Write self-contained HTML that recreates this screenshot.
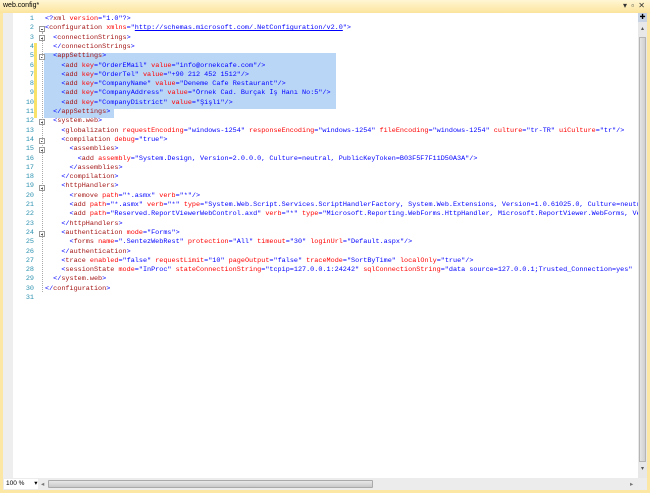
<!DOCTYPE html>
<html><head><meta charset="utf-8"><style>
*{margin:0;padding:0;box-sizing:border-box}
body{width:650px;height:493px;overflow:hidden;background:#fce8a4;font-family:"Liberation Sans",sans-serif;position:relative}
#title{position:absolute;left:0;top:0;width:650px;height:13px;background:linear-gradient(#fff6d4,#fbe49c);font-size:7px;color:#000;padding:2px 0 0 3px}
#ctl{position:absolute;right:4px;top:1px;font-size:8px;color:#333;letter-spacing:1px}
#ed{position:absolute;left:3px;top:13px;width:644px;height:465px;background:#fff;overflow:hidden}
#gut{position:absolute;left:0;top:0;width:10px;height:465px;background:#eeeeee}
#in{position:absolute;left:0;top:2px;width:644px;height:463px}
.ln{position:absolute;left:10px;width:21px;text-align:right;color:#2b91af;font:6.8px "Liberation Mono",monospace;line-height:9.3px}
.code{position:absolute;left:42px;white-space:pre;font:6.8px "Liberation Mono",monospace;color:#0000ff;height:9.3px;line-height:9.3px}
.selb{position:absolute;background:#b9d6f7}
.t{color:#a31515}.a{color:#ff0000}.u{text-decoration:underline}
.chg{position:absolute;left:31px;width:3px;background:#f8e26a}
.box{position:absolute;left:36px;width:6px;height:6px;border:1px solid #999;background:#fff}
.box:after{content:"";position:absolute;left:1px;top:2px;width:2px;height:1px;background:#555}
.vl{position:absolute;left:39px;width:1px;border-left:1px dotted #aaa}
#vs{position:absolute;left:635px;top:0;width:9px;height:465px;background:#e8e8e8}
#vt{position:absolute;left:1px;top:24px;width:7px;height:425px;background:linear-gradient(90deg,#e5e5e5,#cfcfcf);border:1px solid #b5b5b5}
#bot{position:absolute;left:3px;top:478px;width:644px;height:12px;background:#ececec;font-size:6.5px}
#zm{position:absolute;left:1px;top:1px;width:34px;height:10px;background:#fff;padding-left:2px}
#hs{position:absolute;left:45px;top:2px;width:325px;height:8px;background:linear-gradient(#e8e8e8,#c9c9c9);border:1px solid #aaa;border-radius:1px}
</style></head><body>
<div id="title">web.config*</div><div id="ctl">▾ ▫ ✕</div>
<div id="ed">
<div id="gut"></div>
<div id="in">
<div class="chg" style="top:28px;height:75px"></div>
<div class="selb" style="left:41px;top:37.5px;width:292px;height:56px"></div>
<div class="selb" style="left:41px;top:93.5px;width:70px;height:9.3px"></div>
<div class="box" style="top:11px"></div>
<div class="box" style="top:20px"></div>
<div class="box" style="top:39px"></div>
<div class="box" style="top:104px"></div>
<div class="box" style="top:123px"></div>
<div class="box" style="top:132px"></div>
<div class="box" style="top:170px"></div>
<div class="box" style="top:216px"></div>
<div class="vl" style="top:17px;height:260px"></div>
<div id="lines"></div>
<div class="code" style="top:0px">&lt;?<span class="t">xml</span> <span class="a">version</span>="1.0"?&gt;</div>
<div class="code" style="top:9.3px">&lt;<span class="t">configuration</span> <span class="a">xmlns</span>="<span class="u">http://schemas.microsoft.com/.NetConfiguration/v2.0</span>"&gt;</div>
<div class="code" style="top:18.6px">  &lt;<span class="t">connectionStrings</span>&gt;</div>
<div class="code" style="top:27.9px">  &lt;/<span class="t">connectionStrings</span>&gt;</div>
<div class="code" style="top:37.2px">  &lt;<span class="t">appSettings</span>&gt;</div>
<div class="code" style="top:46.5px">    &lt;<span class="t">add</span> <span class="a">key</span>="OrderEMail" <span class="a">value</span>="info@ornekcafe.com"/&gt;</div>
<div class="code" style="top:55.8px">    &lt;<span class="t">add</span> <span class="a">key</span>="OrderTel" <span class="a">value</span>="+90 212 452 1512"/&gt;</div>
<div class="code" style="top:65.1px">    &lt;<span class="t">add</span> <span class="a">key</span>="CompanyName" <span class="a">value</span>="Deneme Cafe Restaurant"/&gt;</div>
<div class="code" style="top:74.4px">    &lt;<span class="t">add</span> <span class="a">key</span>="CompanyAddress" <span class="a">value</span>="Örnek Cad. Burçak İş Hanı No:5"/&gt;</div>
<div class="code" style="top:83.7px">    &lt;<span class="t">add</span> <span class="a">key</span>="CompanyDistrict" <span class="a">value</span>="Şişli"/&gt;</div>
<div class="code" style="top:93px">  &lt;/<span class="t">appSettings</span>&gt;</div>
<div class="code" style="top:102.3px">  &lt;<span class="t">system.web</span>&gt;</div>
<div class="code" style="top:111.6px">    &lt;<span class="t">globalization</span> <span class="a">requestEncoding</span>="windows-1254" <span class="a">responseEncoding</span>="windows-1254" <span class="a">fileEncoding</span>="windows-1254" <span class="a">culture</span>="tr-TR" <span class="a">uiCulture</span>="tr"/&gt;</div>
<div class="code" style="top:120.9px">    &lt;<span class="t">compilation</span> <span class="a">debug</span>="true"&gt;</div>
<div class="code" style="top:130.2px">      &lt;<span class="t">assemblies</span>&gt;</div>
<div class="code" style="top:139.5px">        &lt;<span class="t">add</span> <span class="a">assembly</span>="System.Design, Version=2.0.0.0, Culture=neutral, PublicKeyToken=B03F5F7F11D50A3A"/&gt;</div>
<div class="code" style="top:148.8px">      &lt;/<span class="t">assemblies</span>&gt;</div>
<div class="code" style="top:158.1px">    &lt;/<span class="t">compilation</span>&gt;</div>
<div class="code" style="top:167.4px">    &lt;<span class="t">httpHandlers</span>&gt;</div>
<div class="code" style="top:176.7px">      &lt;<span class="t">remove</span> <span class="a">path</span>="*.asmx" <span class="a">verb</span>="*"/&gt;</div>
<div class="code" style="top:186px">      &lt;<span class="t">add</span> <span class="a">path</span>="*.asmx" <span class="a">verb</span>="*" <span class="a">type</span>="System.Web.Script.Services.ScriptHandlerFactory, System.Web.Extensions, Version=1.0.61025.0, Culture=neutral</div>
<div class="code" style="top:195.3px">      &lt;<span class="t">add</span> <span class="a">path</span>="Reserved.ReportViewerWebControl.axd" <span class="a">verb</span>="*" <span class="a">type</span>="Microsoft.Reporting.WebForms.HttpHandler, Microsoft.ReportViewer.WebForms, Ver</div>
<div class="code" style="top:204.6px">    &lt;/<span class="t">httpHandlers</span>&gt;</div>
<div class="code" style="top:213.9px">    &lt;<span class="t">authentication</span> <span class="a">mode</span>="Forms"&gt;</div>
<div class="code" style="top:223.2px">      &lt;<span class="t">forms</span> <span class="a">name</span>=".SentezWebRest" <span class="a">protection</span>="All" <span class="a">timeout</span>="30" <span class="a">loginUrl</span>="Default.aspx"/&gt;</div>
<div class="code" style="top:232.5px">    &lt;/<span class="t">authentication</span>&gt;</div>
<div class="code" style="top:241.8px">    &lt;<span class="t">trace</span> <span class="a">enabled</span>="false" <span class="a">requestLimit</span>="10" <span class="a">pageOutput</span>="false" <span class="a">traceMode</span>="SortByTime" <span class="a">localOnly</span>="true"/&gt;</div>
<div class="code" style="top:251.1px">    &lt;<span class="t">sessionState</span> <span class="a">mode</span>="InProc" <span class="a">stateConnectionString</span>="tcpip=127.0.0.1:24242" <span class="a">sqlConnectionString</span>="data source=127.0.0.1;Trusted_Connection=yes"</div>
<div class="code" style="top:260.4px">  &lt;/<span class="t">system.web</span>&gt;</div>
<div class="code" style="top:269.7px">&lt;/<span class="t">configuration</span>&gt;</div>
</div>
<div id="vs"><div style="font-size:6px;text-align:center;color:#555;margin-top:12px">▴</div><div id="vt"></div><div style="position:absolute;top:452px;width:9px;font-size:6px;text-align:center;color:#555">▾</div></div>
<div style="position:absolute;left:635px;top:0;width:9px;height:9px;background:#c8d3e3;font-size:7px;text-align:center;line-height:9px">✚</div>
</div>
<div id="bot"><div id="zm">100 % <span style="margin-left:8px">▾</span></div><span style="position:absolute;left:38px;top:2px;color:#777">◂</span><div id="hs"></div><span style="position:absolute;left:627px;top:2px;color:#777">▸</span></div>
<script>
var s='';for(var i=1;i<=31;i++){s+='<div class="ln" style="top:'+((i-1)*9.3)+'px">'+i+'</div>';}
document.getElementById('lines').innerHTML=s;
</script>
</body></html>
